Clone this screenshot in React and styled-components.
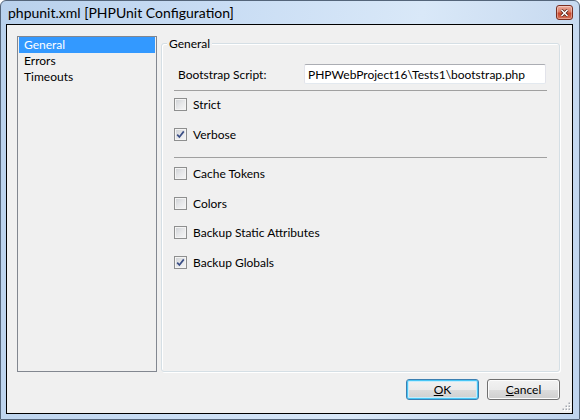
import React from 'react';
import styled, { createGlobalStyle } from 'styled-components';

const GlobalStyle = createGlobalStyle`
  html, body { margin: 0; padding: 0; background: #fff; }
  body {
    font-family: Lato, "Liberation Sans", sans-serif;
    font-size: 12px;
    color: #000;
  }
`;

const Window = styled.div`
  position: relative;
  width: 580px;
  height: 420px;
  box-sizing: border-box;
  display: flex;
  flex-direction: column;
  padding: 0 6px 5px 5px;
  border: 1px solid #54657a;
  border-radius: 6px 6px 0 0;
  background: linear-gradient(100deg, #b9d1ec 0%, #c9ddf4 35%, #d9e8f8 65%, #cadcf1 85%, #bfd4ee 100%);
`;

const TitleBar = styled.div`
  height: 23px;
  display: flex;
  align-items: center;
  padding-left: 2px;
`;

const Title = styled.div`
  flex: 1;
  font-size: 14px;
  color: #000;
`;

const CloseButton = styled.div`
  width: 17px;
  height: 15px;
  box-sizing: border-box;
  display: flex;
  align-items: center;
  justify-content: center;
  border: 1px solid #7a2e20;
  border-radius: 3px;
  background: linear-gradient(180deg, #ecad9e 0%, #dc7a62 45%, #c4432a 55%, #d9755a 100%);
  box-shadow: inset 0 0 0 1px rgba(255, 255, 255, 0.35);
`;

const Client = styled.div`
  position: relative;
  flex: 1;
  display: flex;
  flex-direction: column;
  padding: 11px 12px 0 10px;
  border: 1px solid #000;
  background: #f0f0f0;
`;

const Main = styled.div`
  display: flex;
  gap: 4px;
  height: 336px;
`;

const ListBox = styled.div`
  width: 140px;
  box-sizing: border-box;
  border: 1px solid #828790;
  padding: 0 1px;
  background: #f0f0f0;
`;

const ListItem = styled.div`
  height: 16px;
  line-height: 16px;
  padding-left: 5px;
  background: ${p => (p.$selected ? '#3399ff' : 'transparent')};
  color: ${p => (p.$selected ? '#fff' : '#000')};
`;

const GroupBox = styled.fieldset`
  flex: 1;
  min-width: 0;
  margin: 0;
  padding: 0 12px 0 12px;
  display: flex;
  flex-direction: column;
  border: 1px solid #d5dfe5;
  border-radius: 3px;
  box-shadow: inset 1px 1px 0 #fff, 1px 1px 0 #fff;
`;

const Legend = styled.legend`
  margin-left: -7px;
  padding: 0 2px;
  line-height: 15px;
  background: #f0f0f0;
`;

const FieldRow = styled.div`
  display: flex;
  align-items: center;
  margin-top: 13px;
`;

const FieldLabel = styled.div`
  flex: 1;
  padding-left: 4px;
`;

const TextBox = styled.div`
  width: 242px;
  height: 20px;
  box-sizing: border-box;
  margin-right: 1px;
  padding-left: 3px;
  display: flex;
  align-items: center;
  background: #fff;
  border: 1px solid #e2e3ea;
  border-top-color: #abadb3;
  border-bottom-color: #e3e9ef;
  border-radius: 2px;
`;

const Separator = styled.div`
  height: 0;
  border-top: 1px solid #a0a0a0;
  margin-top: ${p => p.$top}px;
`;

const CheckRow = styled.label`
  display: flex;
  align-items: center;
  gap: 6px;
  height: 13px;
  margin-top: ${p => p.$top}px;
`;

const Box = styled.span`
  width: 13px;
  height: 13px;
  box-sizing: border-box;
  flex: none;
  display: flex;
  align-items: center;
  justify-content: center;
  border: 1px solid #8e8f8f;
  background: linear-gradient(135deg, #cdd0d4 0%, #e6e7e9 50%, #f7f7f7 100%);
  box-shadow: inset 0 0 0 1px #f4f4f4;
`;

const Footer = styled.div`
  display: flex;
  justify-content: flex-end;
  gap: 8px;
  margin-top: 7px;
`;

const Button = styled.div`
  width: 73px;
  height: 21px;
  box-sizing: border-box;
  display: flex;
  align-items: center;
  justify-content: center;
  border: 1px solid ${p => (p.$default ? '#3c7fb1' : '#707070')};
  border-radius: 3px;
  background: linear-gradient(180deg, #f2f2f2 0%, #ebebeb 50%, #dddddd 51%, #cfcfcf 100%);
  box-shadow: ${p => (p.$default ? 'inset 0 0 0 1px #48c6f5, inset 0 0 0 2px #c6ecfb' : 'inset 0 0 0 1px #fcfcfc')};
  u { text-decoration: underline; }
`;

const Grip = styled.svg`
  position: absolute;
  right: 1px;
  bottom: 2px;
`;

const Check = ({ checked }) => (
  <Box>
    {checked ? (
      <svg width="9" height="9" viewBox="0 0 9 9">
        <path d="M1.2 4.6 L3.4 7 L7.8 1.4" fill="none" stroke="#3b4f86" strokeWidth="1.7" />
      </svg>
    ) : null}
  </Box>
);

const options = [
  { label: 'Cache Tokens', checked: false, top: 9 },
  { label: 'Colors', checked: false, top: 17 },
  { label: 'Backup Static Attributes', checked: false, top: 16 },
  { label: 'Backup Globals', checked: true, top: 17 },
];

export default function App() {
  return (
    <>
      <GlobalStyle />
      <Window>
        <TitleBar>
          <Title>phpunit.xml [PHPUnit Configuration]</Title>
          <CloseButton>
            <svg width="9" height="8" viewBox="0 0 9 8">
              <path d="M1.5 1 L7.5 7 M7.5 1 L1.5 7" stroke="#4a1a10" strokeWidth="3" />
              <path d="M1.5 1 L7.5 7 M7.5 1 L1.5 7" stroke="#fff" strokeWidth="1.6" />
            </svg>
          </CloseButton>
        </TitleBar>
        <Client>
          <Main>
            <ListBox>
              <ListItem $selected>General</ListItem>
              <ListItem>Errors</ListItem>
              <ListItem>Timeouts</ListItem>
            </ListBox>
            <GroupBox>
              <Legend>General</Legend>
              <FieldRow>
                <FieldLabel>Bootstrap Script:</FieldLabel>
                <TextBox>PHPWebProject16\Tests1\bootstrap.php</TextBox>
              </FieldRow>
              <Separator $top={6} />
              <CheckRow $top={7}>
                <Check />
                Strict
              </CheckRow>
              <CheckRow $top={17}>
                <Check checked />
                Verbose
              </CheckRow>
              <Separator $top={16} />
              {options.map(o => (
                <CheckRow key={o.label} $top={o.top}>
                  <Check checked={o.checked} />
                  {o.label}
                </CheckRow>
              ))}
            </GroupBox>
          </Main>
          <Footer>
            <Button $default><span><u>O</u>K</span></Button>
            <Button><span><u>C</u>ancel</span></Button>
          </Footer>
          <Grip width="9" height="9" viewBox="0 0 9 9">
            {[[7, 1], [4, 4], [7, 4], [1, 7], [4, 7], [7, 7]].map(([x, y]) => (
              <g key={`${x}-${y}`}>
                <rect x={x + 0.5} y={y + 0.5} width="1.5" height="1.5" fill="#fff" />
                <rect x={x - 0.5} y={y - 0.5} width="1.5" height="1.5" fill="#a3a8b0" />
              </g>
            ))}
          </Grip>
        </Client>
      </Window>
    </>
  );
}
